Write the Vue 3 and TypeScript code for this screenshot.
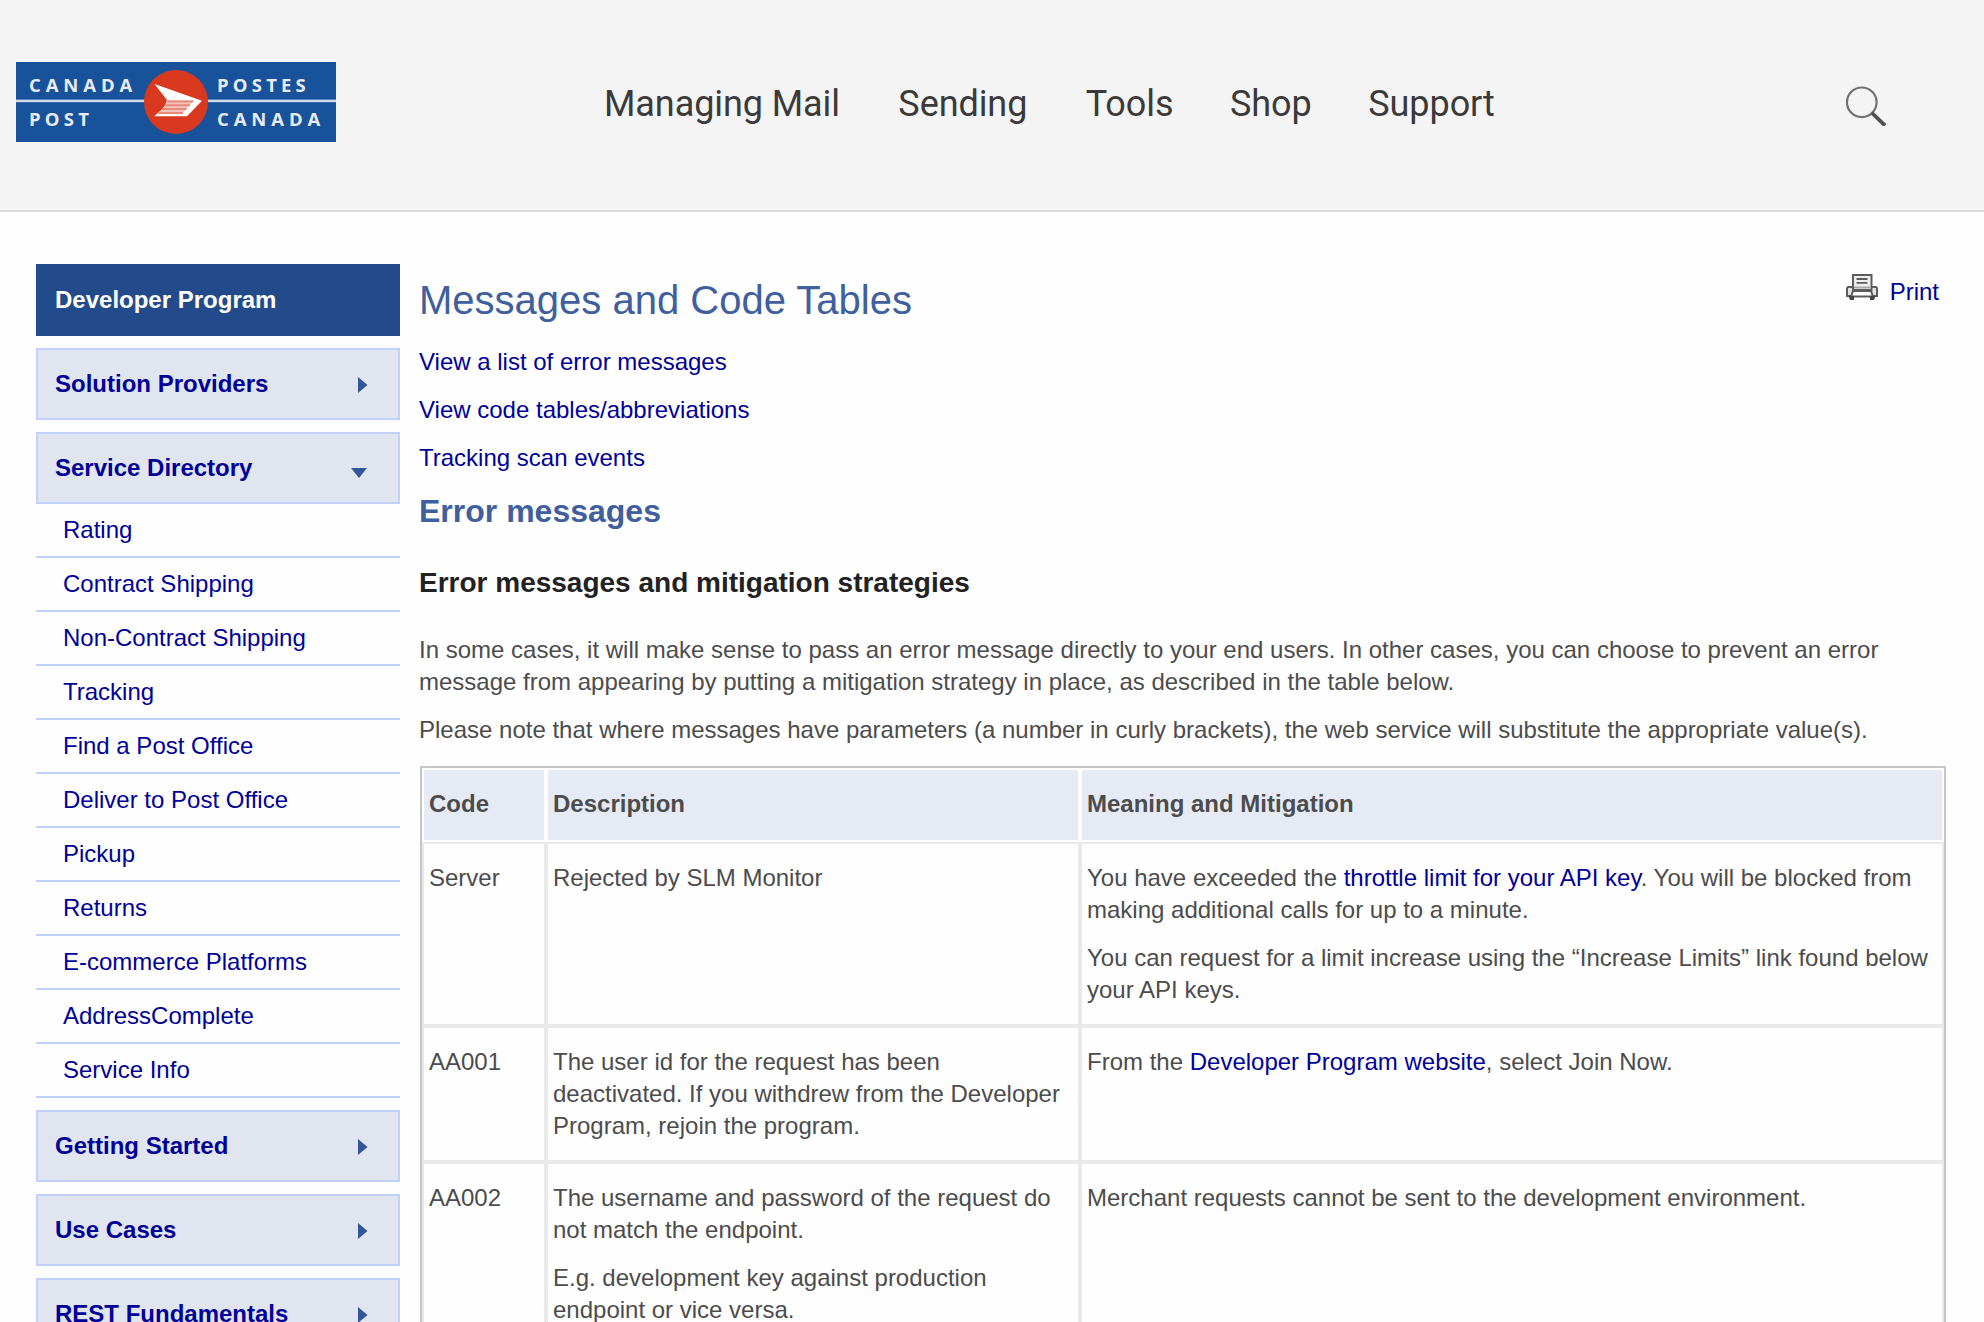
<script setup lang="ts">
interface Section {
  label: string
  open?: boolean
  items?: string[]
}

const nav: string[] = ['Managing Mail', 'Sending', 'Tools', 'Shop', 'Support']

const sections: Section[] = [
  { label: 'Solution Providers' },
  {
    label: 'Service Directory',
    open: true,
    items: [
      'Rating',
      'Contract Shipping',
      'Non-Contract Shipping',
      'Tracking',
      'Find a Post Office',
      'Deliver to Post Office',
      'Pickup',
      'Returns',
      'E-commerce Platforms',
      'AddressComplete',
      'Service Info',
    ],
  },
  { label: 'Getting Started' },
  { label: 'Use Cases' },
  { label: 'REST Fundamentals' },
]

const jumpLinks: string[] = [
  'View a list of error messages',
  'View code tables/abbreviations',
  'Tracking scan events',
]
</script>

<template>
  <div class="page">
    <header class="header">
      <svg class="logo" width="320" height="80" viewBox="0 0 320 80">
        <rect width="320" height="80" fill="#17529a" />
        <rect y="37.6" width="320" height="2.6" fill="#d3dcee" />
        <g class="logo-text">
          <text class="wide" x="13" y="29.7">CANADA</text>
          <text x="13" y="64">POST</text>
          <text x="201" y="29.7">POSTES</text>
          <text class="wide" x="201" y="64">CANADA</text>
        </g>
        <circle cx="160" cy="40" r="32" fill="#d9391f" />
        <path d="M138.5 22 L186 38.8 L171 54.3 L138 54.3 L142 51 L146 47.5 L149 43.5 L151 38 Z" fill="#fff" />
        <path d="M151 38.2H178L166 51.8H141L146 47.5L149 43.5Z" fill="#f3c4bb" />
        <path d="M151.5 39.4H177M149 43.2H174M146 47.1H170.5M142.5 51H167" stroke="#e8897a" stroke-width="2" />
      </svg>
      <nav class="nav">
        <a v-for="n in nav" :key="n">{{ n }}</a>
      </nav>
      <svg class="search" width="40" height="40" viewBox="0 0 40 40" fill="none">
        <circle cx="15.8" cy="16.3" r="14.8" stroke="#707070" stroke-width="2.2" />
        <path d="M26 27 L39 39.5" stroke="#505050" stroke-width="3.8" />
      </svg>
    </header>

    <div class="body">
      <aside class="side">
        <div class="box title">Developer Program</div>
        <template v-for="s in sections" :key="s.label">
          <div class="box">
            <span>{{ s.label }}</span>
            <svg v-if="s.open" class="down" width="18" height="12" viewBox="0 0 18 12">
              <path d="M1 1H17L9 11Z" fill="#33569a" />
            </svg>
            <svg v-else class="right" width="11" height="18" viewBox="0 0 11 18">
              <path d="M1 1L10.5 9L1 17Z" fill="#33569a" />
            </svg>
          </div>
          <ul v-if="s.items" class="items">
            <li v-for="i in s.items" :key="i">{{ i }}</li>
          </ul>
        </template>
      </aside>

      <main class="main">
        <div class="heading">
          <h1>Messages and Code Tables</h1>
          <a class="print">
            <svg width="32" height="26" viewBox="0 0 32 26" fill="none" stroke="#5c5c5c">
              <path d="M2.5 13H29.5Q31 13 31 15V22H1V15Q1 13 2.5 13Z" stroke-width="2" fill="#e4e4e4" />
              <path d="M7 16V1H25.5V16Z" fill="#eee" stroke-width="2" />
              <path d="M10.5 5H21.5M10.5 8.8H21.5" stroke-width="1.8" />
              <path d="M8 13.5H24.5" stroke="#aaa" stroke-width="2" />
              <path d="M7 17H25L27 22.5H5Z" fill="#fff" stroke-width="2" />
              <path d="M2.5 22H8V26H4ZM24 22H29.5L28 26H24Z" fill="#444" stroke="none" />
            </svg>
            <span>Print</span>
          </a>
        </div>
        <p v-for="l in jumpLinks" :key="l"><a>{{ l }}</a></p>
        <h2>Error messages</h2>
        <h3>Error messages and mitigation strategies</h3>
        <p>
          In some cases, it will make sense to pass an error message directly to your end users. In other cases, you can choose to prevent an error message from appearing by putting a mitigation strategy in place, as described in the table below.
        </p>
        <p>
          Please note that where messages have parameters (a number in curly brackets), the web service will substitute the appropriate value(s).
        </p>
        <table>
          <colgroup>
            <col class="c1" />
            <col class="c2" />
            <col class="c3" />
          </colgroup>
          <thead>
            <tr>
              <th>Code</th>
              <th>Description</th>
              <th>Meaning and Mitigation</th>
            </tr>
          </thead>
          <tbody>
            <tr>
              <td><p>Server</p></td>
              <td><p>Rejected by SLM Monitor</p></td>
              <td>
                <p>You have exceeded the <a>throttle limit for your API key</a>. You will be blocked from making additional calls for up to a minute.</p>
                <p>You can request for a limit increase using the “Increase Limits” link found below your API keys.</p>
              </td>
            </tr>
            <tr>
              <td><p>AA001</p></td>
              <td><p>The user id for the request has been deactivated. If you withdrew from the Developer Program, rejoin the program.</p></td>
              <td><p>From the <a>Developer Program website</a>, select Join Now.</p></td>
            </tr>
            <tr>
              <td><p>AA002</p></td>
              <td>
                <p>The username and password of the request do not match the endpoint.</p>
                <p>E.g. development key against production endpoint or vice versa.</p>
              </td>
              <td><p>Merchant requests cannot be sent to the development environment.</p></td>
            </tr>
          </tbody>
        </table>
      </main>
    </div>
  </div>
</template>

<style>
body {
  background: #fefefe;
}
</style>

<style scoped>
.page {
  width: 1984px;
  height: 1322px;
  overflow: hidden;
  font: 24px/32px 'Liberation Sans', Arial, sans-serif;
  color: #4c4c4c;
}
.header {
  box-sizing: border-box;
  height: 212px;
  padding: 62px 98px 0 16px;
  display: flex;
  align-items: flex-start;
  background: #f4f4f4;
  border-bottom: 2px solid #dcdcdc;
}
.logo {
  display: block;
}
.logo-text {
  font: 700 18.5px 'Open Sans', sans-serif;
  letter-spacing: 4.2px;
  fill: #e9ecf8;
}
.logo-text .wide {
  letter-spacing: 4.9px;
}
.nav {
  display: flex;
  gap: 57.3px;
  margin: 22px 0 0 268px;
  font: 36px/40px Roboto, sans-serif;
  letter-spacing: -0.08px;
  color: #3a3a3a;
  white-space: nowrap;
}
.nav a:nth-child(-n + 2) {
  margin-right: 1.1px;
}
.nav a:nth-child(n + 3) {
  margin-right: -0.7px;
}
.search {
  margin: 24px 0 0 auto;
}
.body {
  display: flex;
  align-items: flex-start;
  padding: 52px 38px 0 36px;
}
.side {
  width: 364px;
  flex: none;
  margin-right: 19px;
  color: #000099;
}
.box {
  box-sizing: border-box;
  height: 72px;
  margin-top: 12px;
  padding: 0 30px 0 17px;
  display: flex;
  align-items: center;
  justify-content: space-between;
  font-weight: bold;
  background: #e0e5ef;
  border: 2px solid #c2d1fb;
}
.box.title {
  margin-top: 0;
  color: #fff;
  background: #234b8b;
  border-color: #234b8b;
}
.right {
  margin-top: 2px;
}
.down {
  margin-top: 10px;
}
.items {
  list-style: none;
  margin: 0;
  padding: 0;
}
.items li {
  box-sizing: border-box;
  height: 54px;
  padding-left: 27px;
  line-height: 52px;
  border-bottom: 2px solid #bfd0fb;
}
.main {
  flex: 1;
  min-width: 0;
}
a {
  color: #000099;
}
.nav a {
  color: inherit;
}
.heading {
  display: flex;
  justify-content: space-between;
  height: 66px;
  margin-bottom: 16px;
}
h1,
h2,
h3 {
  margin: 0;
  color: #3f5f9f;
}
h1 {
  font-size: 40px;
  font-weight: normal;
  line-height: 72px;
}
.print {
  display: flex;
  align-items: flex-start;
  gap: 12px;
  margin: 10px 7px 0 0;
}
.print span {
  margin-top: 2px;
}
p {
  margin: 0 0 16px;
}
h2 {
  margin-top: 18px;
  font-size: 32px;
  line-height: 38px;
}
h3 {
  margin: 37px 0 35px;
  font-size: 28px;
  line-height: 32px;
  color: #222;
}
table {
  width: 1526px;
  margin: 20px 0 0 1px;
  table-layout: fixed;
  border-collapse: separate;
  border-spacing: 0;
  border: 2px solid #c5c5c9;
}
.c1 {
  width: 124px;
}
.c2 {
  width: 534px;
}
.c3 {
  width: 864px;
}
th,
td {
  padding: 2px 4px 2px 5px;
  border: 2px solid #e9e9e9;
  text-align: left;
  vertical-align: top;
}
th {
  height: 50px;
  padding: 18px 4px 2px 5px;
  background: #e6eaf5;
  border-color: #fff;
}
td p {
  margin: 16px 0;
}
</style>
